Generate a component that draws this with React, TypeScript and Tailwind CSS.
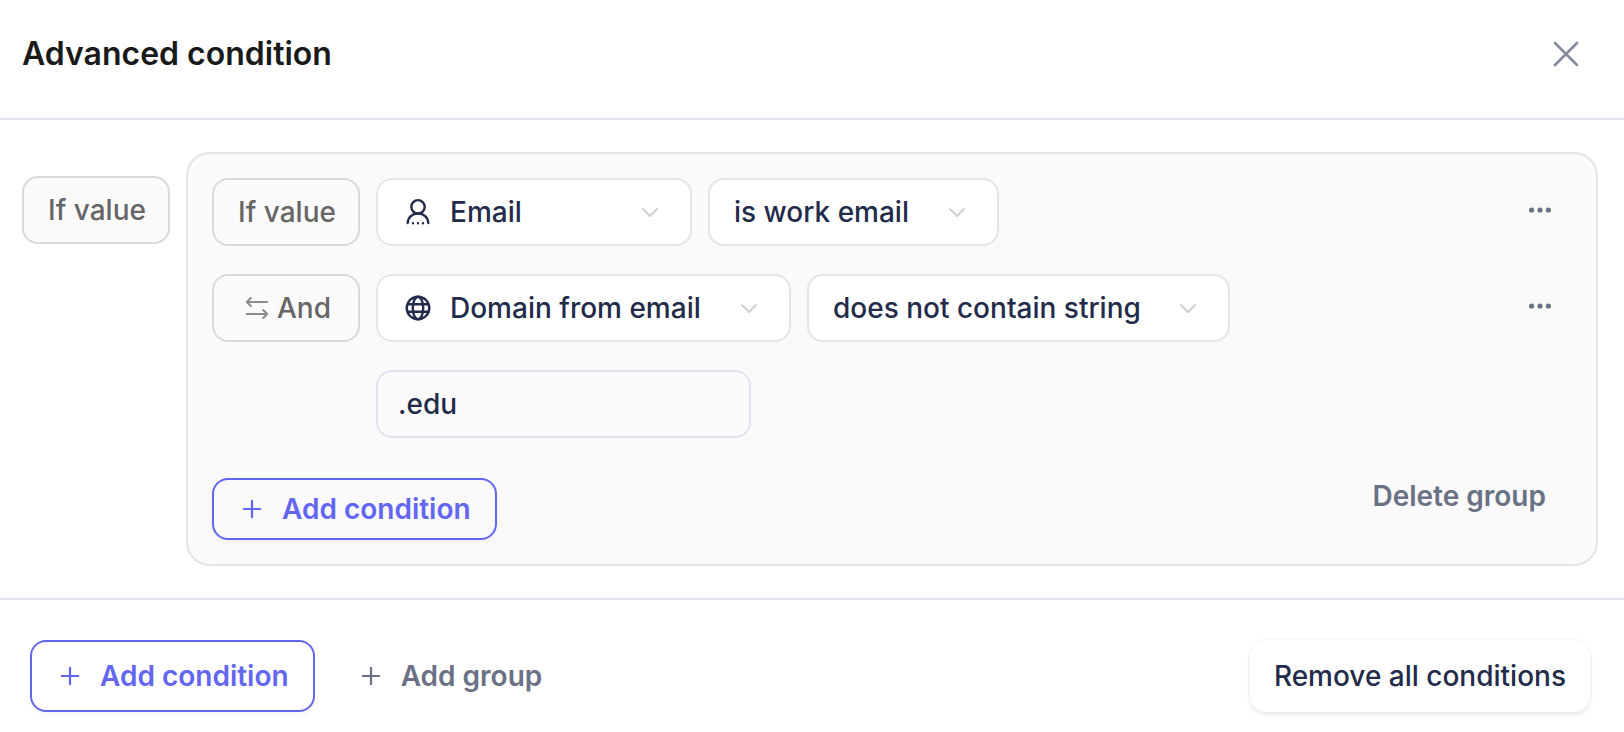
import { useState } from "react";
import type { ReactNode } from "react";
import clsx from "clsx";

function UserIcon() {
  return (
    <svg width="28" height="28" viewBox="0 0 28 28" fill="none" stroke="currentColor" strokeWidth="2.4" strokeLinecap="round" aria-hidden>
      <circle cx="14" cy="8.8" r="6.7" />
      <path d="M3.700 25c.3-5.800 4.500-9.500 10.300-9.500s10 3.700 10.300 9.500" />
      <path d="M9 25.200h.01M14 25.200h.01M19 25.200h.01" />
    </svg>
  );
}

function GlobeIcon() {
  return (
    <svg width="28" height="28" viewBox="0 0 28 28" fill="none" stroke="currentColor" strokeWidth="2.4" aria-hidden>
      <circle cx="14" cy="14" r="11.300" />
      <ellipse cx="14" cy="14" rx="5.200" ry="11.300" />
      <path d="M3.400 10.200h21.200M3.400 17.800h21.200" />
    </svg>
  );
}

function SwapIcon() {
  return (
    <svg width="28" height="28" viewBox="0 0 28 28" fill="none" stroke="#8c8c8c" strokeWidth="2" strokeLinecap="round" strokeLinejoin="round" aria-hidden>
      <path d="M24.200 8H3.800M7.800 4 3.800 8l4 4" />
      <path d="M3.800 20h20.400M20.200 16l4 4-4 4" />
    </svg>
  );
}

function PlusIcon() {
  return (
    <svg width="28" height="28" viewBox="0 0 28 28" fill="none" stroke="currentColor" strokeWidth="2.2" strokeLinecap="round" aria-hidden>
      <path d="M14 5.800v16.400M5.800 14h16.400" />
    </svg>
  );
}

interface DropdownProps {
  label: string;
  options: string[];
  icon?: ReactNode;
  className: string;
}

function Dropdown({ label, options, icon, className }: DropdownProps) {
  return (
    <div className={clsx("relative text-[#232b4b]", className)}>
      {icon && (
        <span className="pointer-events-none absolute inset-y-0 left-7 flex items-center">{icon}</span>
      )}
      <select
        aria-label={label}
        className={clsx(
          "h-[68px] w-full appearance-none rounded-2xl border-2 border-[#e5e5e5] bg-white pr-16 font-medium outline-none focus-visible:border-[#6366f1]",
          icon ? "pl-[72px]" : "pl-6"
        )}
      >
        {options.map((option) => (
          <option key={option}>{option}</option>
        ))}
      </select>
      <svg
        className="pointer-events-none absolute inset-y-0 right-8 my-auto"
        width="20"
        height="20"
        viewBox="0 0 20 20"
        fill="none"
        stroke="#cfcfcf"
        strokeWidth="2"
        strokeLinecap="round"
        strokeLinejoin="round"
        aria-hidden
      >
        <path d="m3 7 7 7 7-7" />
      </svg>
    </div>
  );
}

const tagClass =
  "flex h-[68px] w-[148px] shrink-0 items-center justify-center gap-1.5 rounded-2xl border-2 border-[#d9d9d9] bg-[#fafafa] pl-0.5 font-medium text-[#666666]";

function AddConditionButton({ className }: { className: string }) {
  return (
    <button
      type="button"
      className={clsx(
        "flex items-center gap-4 rounded-2xl border-2 border-[#6366f1] px-6 font-semibold text-[#6366f1] shadow-[0_3px_4px_rgba(0,0,0,0.04)]",
        className
      )}
    >
      <PlusIcon />
      Add condition
    </button>
  );
}

function MoreButton() {
  return (
    <button type="button" aria-label="More options" className="ml-auto flex size-16 items-center justify-center text-[#6b7185]">
      <svg width="24" height="24" viewBox="0 0 24 24" fill="currentColor" aria-hidden>
        <circle cx="3.600" cy="12" r="2.600" />
        <circle cx="12" cy="12" r="2.600" />
        <circle cx="20.400" cy="12" r="2.600" />
      </svg>
    </button>
  );
}

export default function App() {
  const [value, setValue] = useState(".edu");

  return (
    <div className="bg-white font-['Inter',sans-serif] text-[28px] leading-9">
      <header className="flex items-center justify-between border-b-2 border-[#e0e4f0] pt-8 pr-11 pb-[42px] pl-[22px]">
        <h1 className="text-[32px] leading-[44px] font-semibold text-[#1a1a1a]">Advanced condition</h1>
        <button type="button" aria-label="Close" className="text-[#858b9c]">
          <svg width="28" height="28" viewBox="0 0 28 28" fill="none" stroke="currentColor" strokeWidth="2.600" strokeLinecap="round" aria-hidden>
            <path d="m3 3 22 22M25 3 3 25" />
          </svg>
        </button>
      </header>

      <main className="flex items-start gap-4 py-8 pr-[26px] pl-[22px]">
        <div className={clsx(tagClass, "mt-6")}>If value</div>

        <section className="flex grow flex-col gap-7 rounded-3xl border-2 border-[#e5e5e5] bg-[#fafafa] p-6">
          <div className="flex items-start gap-4">
            <div className={tagClass}>If value</div>
            <Dropdown label="Field" icon={<UserIcon />} options={["Email"]} className="w-[316px]" />
            <Dropdown label="Operator" options={["is work email"]} className="w-[291px]" />
            <MoreButton />
          </div>

          <div className="flex items-start gap-4">
            <button type="button" className={tagClass}>
              <SwapIcon />
              And
            </button>
            <Dropdown label="Field" icon={<GlobeIcon />} options={["Domain from email"]} className="w-[415px]" />
            <Dropdown label="Operator" options={["does not contain string"]} className="w-[423px]" />
            <MoreButton />
          </div>

          <input
            type="text"
            aria-label="Value"
            value={value}
            onChange={(e) => setValue(e.target.value)}
            className="ml-[164px] h-[68px] w-[375px] rounded-2xl border-2 border-[#e0e4f0] bg-[#fafafa] px-5 font-medium text-[#232b4b] outline-none focus-visible:border-[#6366f1]"
          />

          <div className="mt-3 flex items-start justify-between">
            <AddConditionButton className="h-[62px]" />
            <button type="button" className="px-[26px] font-semibold text-[#6b7185]">
              Delete group
            </button>
          </div>
        </section>
      </main>

      <footer className="flex items-center gap-4 border-t-2 border-[#e0e4f0] pt-10 pr-[34px] pb-5 pl-[30px]">
        <AddConditionButton className="h-[72px]" />
        <button type="button" className="flex h-[72px] items-center gap-4 px-[26px] font-semibold text-[#6b7185]">
          <PlusIcon />
          Add group
        </button>
        <button
          type="button"
          className="ml-auto h-[72px] rounded-2xl px-6 font-medium text-[#232b4b] shadow-[0_0_0_2px_rgba(0,0,0,0.02),0_3px_5px_rgba(0,0,0,0.07)]"
        >
          Remove all conditions
        </button>
      </footer>
    </div>
  );
}
